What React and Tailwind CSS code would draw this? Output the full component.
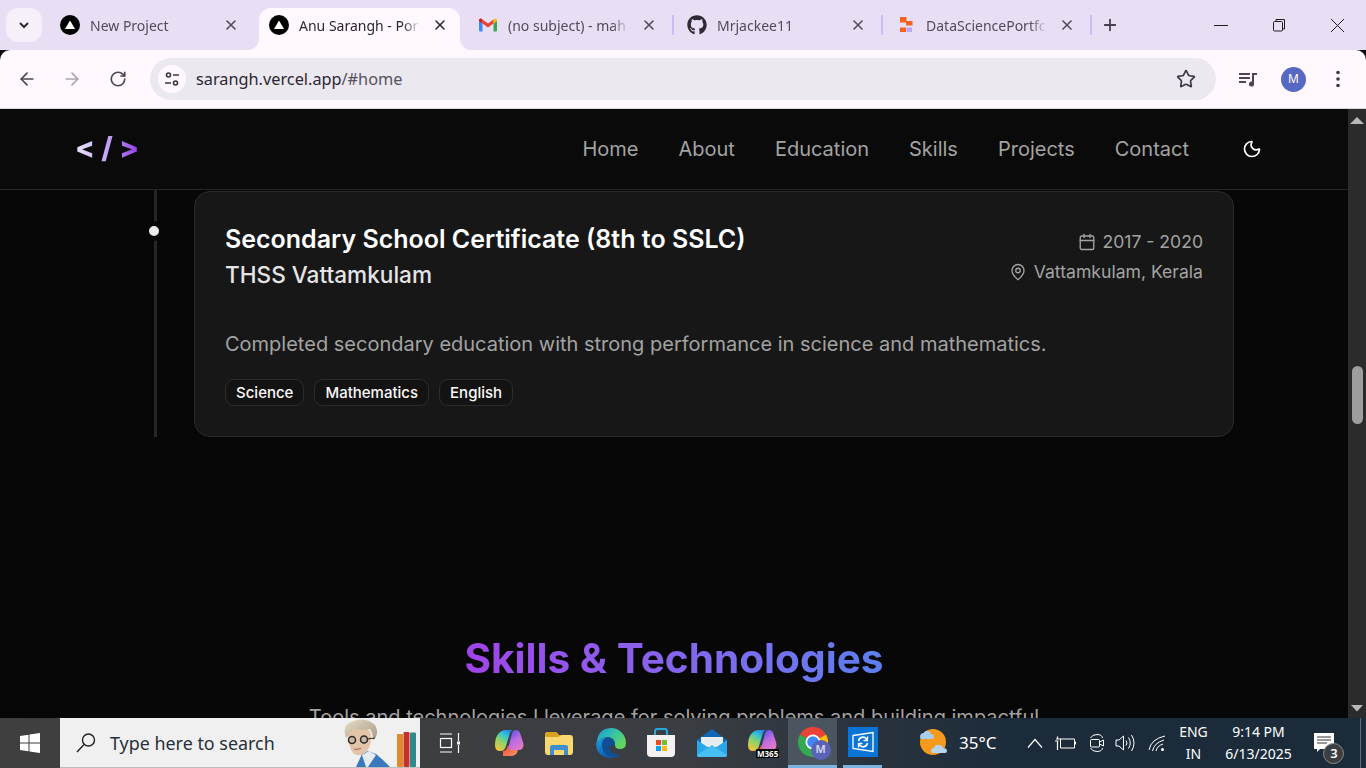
import React from "react";
import { ArrowLeft, ArrowRight, RotateCw, Star, X, Plus, Moon, Calendar, MapPin } from "lucide-react";
import { FaGithub } from "react-icons/fa";

const VercelIcon = () => (
  <svg width="20" height="20" viewBox="0 0 20 20" className="shrink-0">
    <circle cx="10" cy="10" r="10" fill="#000" />
    <path d="M10 5.500 15 14H5z" fill="#fff" />
  </svg>
);
const GmailIcon = () => (
  <svg width="20" height="20" viewBox="0 0 20 20" className="shrink-0">
    <path d="M1 5v10.500q0 1 1 1h2.500V8.500z" fill="#4285f4" />
    <path d="M19 5v10.500q0 1-1 1h-2.500V8.500z" fill="#34a853" />
    <path d="M15.500 4.500v4L19 6V5q0-2-2-1.500z" fill="#fbbc04" />
    <path d="M4.500 4.500v4L10 12.500l5.500-4v-4L10 8.500z" fill="#ea4335" />
    <path d="M1 5v1l3.500 2.500v-4L3 3.500Q1 3 1 5" fill="#c5221f" />
  </svg>
);
const DsIcon = () => (
  <svg width="20" height="20" viewBox="0 0 20 20" className="shrink-0">
    <rect x="4" y="2" width="6.500" height="5.500" fill="#f4621f" />
    <rect x="10" y="6" width="6.500" height="4.500" fill="#f4621f" />
    <rect x="4" y="12.500" width="6" height="4.500" fill="#f4621f" />
    <rect x="10.500" y="12.500" width="5.500" height="4.500" fill="#b9a8f5" />
  </svg>
);

const Tab = ({ icon, title, active, sep, className = "" }) => (
  <div className={`relative flex items-center h-[42px] pb-[8px] pl-[10px] pr-[3px] shrink-0 ${active ? "w-[201px] bg-[#fff8ff] rounded-t-[12px]" : "w-[209px]"} ${className}`}>
    {icon}
    <span className={`ml-[10px] flex-1 min-w-0 overflow-hidden whitespace-nowrap text-[14px] ${active ? "text-[#2b2733]" : "text-[#514b5c]"}`}
      style={{ maskImage: "linear-gradient(to right, #000 86%, transparent 100%)" }}>{title}</span>
    <X size={16} strokeWidth={2.4} className={`shrink-0 ml-[12px] ${active ? "text-[#2b2733]" : "text-[#514b5c]"}`} />
    <span className={`w-[2px] h-[20px] shrink-0 ${active ? "ml-[7px]" : "ml-[15px]"} ${sep ? "bg-[#cdbdf2]" : "bg-transparent"}`} />
    {active && <>
      <span className="absolute -left-[12px] bottom-0 w-[12px] h-[12px] bg-[radial-gradient(circle_at_0_0,transparent_12px,#fff8ff_12.5px)]" />
      <span className="absolute -right-[12px] bottom-0 w-[12px] h-[12px] bg-[radial-gradient(circle_at_100%_0,transparent_12px,#fff8ff_12.5px)]" />
    </>}
  </div>
);

const TabStrip = () => (
  <div className="h-[50px] bg-[#e9dff5] flex shrink-0 text-[#514b5c] relative">
    <div className="flex items-end w-[50px] shrink-0 pl-[6px] pb-[8px]">
      <div className="w-[36px] h-[34px] bg-[#f6f0fb] rounded-[12px] flex items-center justify-center">
        <svg width="12" height="12" viewBox="0 0 12 12"><path d="M2 4l4 4 4-4" fill="none" stroke="#2b2733" strokeWidth="2" /></svg>
      </div>
    </div>
    <div className="flex items-end h-full">
      <Tab icon={<VercelIcon />} title="New Project" />
      <Tab icon={<VercelIcon />} title="Anu Sarangh - Por" active />
      <Tab icon={<GmailIcon />} title="(no subject) - mah" sep className="ml-[8px]" />
      <Tab icon={<FaGithub size={20} color="#2f2b36" className="shrink-0" />} title="Mrjackee11" sep />
      <Tab icon={<DsIcon />} title="DataSciencePortfc" sep />
    </div>
    <div className="flex items-center h-full">
      <Plus size={18} strokeWidth={2.4} className="text-[#454050] ml-[6px]" />
    </div>
    <div className="ml-auto flex items-center h-full text-[#1f1f1f]">
      <div className="w-[58px] flex justify-center"><div className="w-[14px] h-px bg-[#1f1f1f]" /></div>
      <div className="w-[58px] flex justify-center">
        <svg width="14" height="14" viewBox="0 0 14 14" fill="none" stroke="#1f1f1f"><rect x="1.500" y="3.500" width="9" height="9.500" rx="1" /><path d="M4 3V1.500h8.500V11H11" /></svg>
      </div>
      <div className="w-[58px] flex justify-center">
        <svg width="15" height="15" viewBox="0 0 15 15" stroke="#1f1f1f"><path d="M1 1l13 13M14 1 1 14" /></svg>
      </div>
    </div>
  </div>
);

const ToolBar = () => (
  <div className="h-[59px] bg-[#fff8ff] rounded-t-[10px] flex items-center shrink-0 border-b border-[#dcd6e2] relative">
    <div className="w-[150px] flex items-center shrink-0 pl-[17px]">
      <ArrowLeft size={20} strokeWidth={2} className="text-[#4b4653]" />
      <ArrowRight size={20} strokeWidth={2} className="text-[#a9a4b0] ml-[25px]" />
      <RotateCw size={18} strokeWidth={2.2} className="text-[#4b4653] ml-[27px]" />
    </div>
    <div className="w-[1066px] h-[42px] bg-[#ebe8f0] rounded-full flex items-center pl-[8px] pr-[20px]">
      <div className="w-[28px] h-[28px] rounded-full bg-[#fff8ff] flex items-center justify-center">
        <svg width="16" height="16" viewBox="0 0 16 16" fill="none" stroke="#38333f" strokeWidth="1.600">
          <circle cx="4.500" cy="4" r="2" /><path d="M9 4h6M1 12h6" /><circle cx="11.500" cy="12" r="2" />
        </svg>
      </div>
      <span className="ml-[10px] text-[16.3px] text-[#2b2733] whitespace-nowrap">sarangh.vercel.app<span className="text-[#57525f]">/#home</span></span>
      <Star size={20} strokeWidth={2} className="ml-auto text-[#3d3845]" />
    </div>
    <div className="flex items-center">
      <svg width="20" height="18" viewBox="0 0 20 18" className="ml-[22px]" fill="#4b4653">
        <rect x="1" y="3" width="11" height="2" /><rect x="1" y="7" width="11" height="2" /><rect x="1" y="11" width="7" height="2" />
        <path d="M14 3h5v2h-3v9a2.500 2.500 0 1 1-2-2.400z" />
      </svg>
      <div className="ml-[23px] w-[25px] h-[25px] rounded-full bg-[#5768c4] text-white text-[12px] flex items-center justify-center">M</div>
      <svg width="4" height="18" viewBox="0 0 4 18" className="ml-[30px]" fill="#3d3845"><circle cx="2" cy="2.500" r="1.800" /><circle cx="2" cy="9" r="1.800" /><circle cx="2" cy="15.500" r="1.800" /></svg>
    </div>
  </div>
);

const NavBar = () => (
  <nav className="h-[81px] border-b border-[#262626] bg-[#0a0a0a] flex items-center pl-[75px] pr-[86px] shrink-0">
    <span className="text-[29px] font-extrabold bg-linear-to-r from-[#ede4fb] via-[#c4a5f7] to-[#9333ea] bg-clip-text text-transparent whitespace-pre -mt-[2px]">{"< / >"}</span>
    <div className="ml-auto flex items-center gap-[40px] text-[20px] text-[#a3a3a3]">
      <span>Home</span><span>About</span><span>Education</span><span>Skills</span><span>Projects</span><span>Contact</span>
      <Moon size={20} strokeWidth={2} className="text-white ml-[13px]" />
    </div>
  </nav>
);

const Tag = ({ children }) => (
  <span className="h-[27px] px-[10px] pt-px flex items-center rounded-[9px] border border-[#2c2c2c] bg-[#131313] text-[15px] font-medium text-[#fafafa]">{children}</span>
);

const EducationCard = () => (
  <div className="flex pl-[154px] shrink-0">
    <div className="relative w-[3px] bg-[#262626]">
      <span className="absolute left-[-10px] top-[31px] w-[10px] h-[10px] rounded-full bg-[#ededed] box-content border-[5px] border-[#070707]" />
    </div>
    <div className="ml-[37px] mt-px w-[1040px] h-[246px] rounded-[16px] border border-[#2a2a2a] bg-[#171717] px-[30px] pt-[29px]">
      <div className="flex justify-between">
        <div>
          <h3 className="text-[25px] leading-[36px] font-semibold text-white">Secondary School Certificate (8th to SSLC)</h3>
          <p className="text-[22.6px] leading-[35px] font-medium text-[#e5e5e5]">THSS Vattamkulam</p>
        </div>
        <div className="flex flex-col items-end text-[#a3a3a3] text-[17.6px] pt-[6px]">
          <div className="flex items-center h-[30px]"><Calendar size={18} strokeWidth={1.8} className="mr-[6px]" />2017 - 2020</div>
          <div className="flex items-center h-[30px]"><MapPin size={18} strokeWidth={1.8} className="mr-[7px]" />Vattamkulam, Kerala</div>
        </div>
      </div>
      <p className="mt-[37px] text-[20px] leading-[30px] text-[#a3a3a3]">Completed secondary education with strong performance in science and mathematics.</p>
      <div className="mt-[20px] flex gap-[10px]">
        <Tag>Science</Tag><Tag>Mathematics</Tag><Tag>English</Tag>
      </div>
    </div>
  </div>
);

const Scrollbar = () => (
  <div className="w-[18px] bg-[#2b2b2b] shrink-0 flex flex-col items-center">
    <svg width="14" height="18" viewBox="0 0 14 18" fill="#b8b8b8"><path d="M0 15 7 8l7 7z" /></svg>
    <div className="mt-[239px] ml-px w-[11px] h-[58px] rounded-[6px] bg-[#9e9e9e]" />
    <svg width="14" height="18" viewBox="0 0 14 18" fill="#b8b8b8" className="mt-auto"><path d="M1 5l6 6.500L13 5z" /></svg>
  </div>
);

const Win = () => (
  <svg width="20" height="20" viewBox="0 0 20 20" fill="#fff"><path d="M0 3l8.500-1.300V9.500H0zM9.500 1.500 20 0v9.500H9.500zM0 10.500h8.500v7.800L0 17zM9.500 10.500H20V20L9.500 18.500z" /></svg>
);

const Person = () => (
  <svg width="78" height="48" viewBox="0 0 78 48" className="absolute right-0 bottom-0">
    <defs>
      <linearGradient id="hair" x1="0" y1="0" x2="1" y2="1"><stop offset="0" stopColor="#e6dcc4" /><stop offset="1" stopColor="#a69a84" /></linearGradient>
    </defs>
    <path d="M14 48 20 35l6-3 8 3 7 6 7 7z" fill="#3a78bd" />
    <path d="M20 36l4 12h2l8-12-7-4z" fill="#e6ebef" />
    <path d="M6 18q0-10 11-10 12 0 12 10 0 10-5 15-4 4-9 3-5-1-7-8-2-5-2-10" fill="#e3c4a8" />
    <path d="M4 19Q-1 5 12 2q10-4 20 3 5 5 2 13l-3 3q0-7-3-11-8 2-16 0-5 2-5 6z" fill="url(#hair)" />
    <circle cx="10" cy="21" r="3.500" fill="#cdb8a4" stroke="#2b2b2b" strokeWidth="1.500" />
    <circle cx="22" cy="20.500" r="3.500" fill="#cdb8a4" stroke="#2b2b2b" strokeWidth="1.500" />
    <path d="M25 20l8-1" stroke="#2b2b2b" strokeWidth="1.200" />
    <path d="M12 30q4 1 7-1" stroke="#a8705a" strokeWidth="1.200" fill="none" />
    <rect x="55" y="15" width="6" height="33" fill="#e08a2a" rx="1" />
    <rect x="61.500" y="13" width="6" height="35" fill="#c4322b" rx="1" />
    <rect x="68" y="13.500" width="6" height="34.500" fill="#2f8a8a" rx="1" />
  </svg>
);

const Copilot = ({ id }) => (
  <svg width="29" height="26" viewBox="0 0 29 26">
    <defs>
      <linearGradient id={`${id}a`} x1=".8" y1="0" x2=".2" y2="1"><stop offset="0" stopColor="#2a7be8" /><stop offset=".3" stopColor="#30c4d8" /><stop offset=".6" stopColor="#8dd468" /><stop offset="1" stopColor="#f6c23c" /></linearGradient>
      <linearGradient id={`${id}b`} x1=".2" y1="0" x2=".8" y2="1"><stop offset="0" stopColor="#4a55e0" /><stop offset=".45" stopColor="#b86ae6" /><stop offset="1" stopColor="#ec7ac0" /></linearGradient>
      <linearGradient id={`${id}c`} x1="0" y1="0" x2="1" y2="1"><stop offset="0" stopColor="#f04a3a" /><stop offset="1" stopColor="#f7986a" /></linearGradient>
    </defs>
    <path d="M10 0h9q-3 0-4 3l-4 13q-1 5-6 5-5 0-5-6 0-8 4-12 3-3 6-3" fill={`url(#${id}a)`} />
    <path d="M17 3q1-3 4-3 3 0 4 3l3 9q2 8-5 8h-8l-2-3 1-2z" fill={`url(#${id}b)`} />
    <path d="M8 26q4 0 5-3l1-3h9q-1 6-8 6zM8 21q3 0 4-3l1-3 2 5-3 6H8z" fill={`url(#${id}c)`} />
  </svg>
);

const Folder = () => (
  <svg width="28" height="23" viewBox="0 0 28 23">
    <path d="M0 3q0-3 3-3h8l3 3h11q3 0 3 3v14q0 3-3 3H3q-3 0-3-3z" fill="#f8d670" />
    <path d="M0 4V3q0-3 3-3h8l3 3 3 0-4 2H3q-3 0-3-1" fill="#d9a21e" />
    <path d="M5 23V15q0-2 2-2h14q2 0 2 2v8h-4v-5h-10v5z" fill="#3d8fd1" />
  </svg>
);
const Edge = () => (
  <svg width="30" height="30" viewBox="0 0 30 30">
    <defs>
      <linearGradient id="edgeg" x1="0" y1="0" x2="1" y2=".6"><stop offset="0" stopColor="#1a9bd8" /><stop offset=".55" stopColor="#36c3a8" /><stop offset="1" stopColor="#63d65c" /></linearGradient>
      <linearGradient id="edgeb" x1="0" y1="0" x2=".5" y2="1"><stop offset="0" stopColor="#1e9fe0" /><stop offset="1" stopColor="#0c5cb0" /></linearGradient>
    </defs>
    <path d="M15 0A15 15 0 0 1 30 15q0 6-6 6-5 0-5-4 0-7-7-8Q5 9 1 15 1 1 15 0" fill="url(#edgeg)" />
    <path d="M0 15Q5 9 12 9q-6 2-6 8 1 12 14 12Q17 30 15 30 0 29 0 15" fill="url(#edgeb)" />
    <path d="M12 9q7 1 7 8-5 0-6 3 0 5 11 7-3 2-5 2Q7 29 6 17q0-6 6-8" fill="#0f4f95" />
  </svg>
);
const Store = () => (
  <svg width="30" height="30" viewBox="0 0 30 30">
    <path d="M9 8V3.500Q9 1 11 1h8q2 0 2 2.500V8" fill="none" stroke="#25a8e0" strokeWidth="2" />
    <path d="M1 7h28v18q0 4-4 4H5q-4 0-4-4z" fill="#f4f2f0" />
    <rect x="10" y="12" width="5" height="5" fill="#ea4a2a" />
    <rect x="16" y="12" width="5" height="5" fill="#7cb92c" />
    <rect x="10" y="18" width="5" height="5" fill="#14a0e4" />
    <rect x="16" y="18" width="5" height="5" fill="#fcb60f" />
  </svg>
);
const Mail = () => (
  <svg width="30" height="28" viewBox="0 0 30 28">
    <path d="M0 11 15 0l15 11v3H0z" fill="#0f67b5" />
    <path d="M4 8h22v10H4z" fill="#e8edf2" />
    <path d="M0 11l15 10 15-10v15q0 2-2 2H2q-2 0-2-2z" fill="#2aa7ea" />
    <path d="M0 26 15 16l15 10v0q0 2-2 2H2q-2 0-2-2" fill="#47bff2" />
  </svg>
);
const Chrome = () => (
  <div className="relative w-[30px] h-[30px]">
    <svg width="30" height="30" viewBox="0 0 30 30">
      <path d="M15 15 2 7.500A15 15 0 0 1 28 7.500z" fill="#ea4335" />
      <path d="M15 15 2 7.500A15 15 0 0 0 15 30z" fill="#34a853" />
      <path d="M15 15 28 7.500A15 15 0 0 1 15 30z" fill="#fbbc04" />
      <circle cx="15" cy="15" r="7.500" fill="#fff" />
      <circle cx="15" cy="15" r="5.800" fill="#4285f4" />
    </svg>
    <span className="absolute left-[13px] top-[13px] w-[20px] h-[20px] rounded-full bg-[#5a63b8] text-[#d8daf0] text-[11px] font-semibold flex items-center justify-center">M</span>
  </div>
);
const SyncTile = () => (
  <div className="w-[30px] h-[30px] bg-[#0a74d6] flex items-center justify-center">
    <svg width="24" height="22" viewBox="0 0 24 22" fill="none" stroke="#fff" strokeWidth="1.300">
      <path d="M2 4.500 22 1.500v19L2 17.500z" />
      <path d="M7.500 10a4.500 4.500 0 0 1 8-2l1 1M16.500 12a4.500 4.500 0 0 1-8 2l-1-1" strokeWidth="1.700" />
      <path d="M16.500 5.500v4h-4M7.500 16.500v-4h4" strokeWidth="1.300" />
    </svg>
  </div>
);
const Weather = () => (
  <svg width="32" height="30" viewBox="0 0 32 30">
    <circle cx="16" cy="14" r="13" fill="#f59a1d" />
    <path d="M3 9q0-4 4-4 1-3 4-2t3 3q3 0 3 3 0 2-2 2H5Q3 11 3 9" fill="#a9cdf0" />
    <path d="M14 23q0-3 3-3 1-4 5-3t4 3q4 0 4 3 0 2-2 2H16q-2 0-2-2" fill="#b7d5f2" />
  </svg>
);

const TrayIcons = () => (
  <div className="flex items-center text-white">
    <svg width="16" height="10" viewBox="0 0 16 10" fill="none" stroke="#fff" strokeWidth="1.200" className="ml-[31px]"><path d="M1 9.500l7-8 7 8" /></svg>
    <svg width="21" height="14" viewBox="0 0 21 14" fill="none" stroke="#fff" className="ml-[12px]"><path d="M5.500 3h14v9h-14z" /><path d="M1 3h5M0 5h3.500M2.500 0.500v2.500M2.500 5v9" strokeWidth="1.200" /><rect x="19.500" y="5.500" width="1.500" height="3" fill="#fff" stroke="none" /></svg>
    <svg width="15" height="18" viewBox="0 0 15 18" fill="none" stroke="#fff" className="ml-[13px]"><path d="M1.500 4Q3 .5 8 .5T13.500 4M1.500 14Q3 17.500 8 17.500T13.500 14" /><rect x="1.500" y="5.500" width="9" height="7.500" rx="1" /><path d="M10.500 8l4-2v6l-4-2" /></svg>
    <svg width="20" height="18" viewBox="0 0 20 18" fill="none" stroke="#fff" className="ml-[11px]"><path d="M1 6h3l4.500-4v14L4 12H1zM11 6.500q2 2.500 0 5M13.500 3.500q3.500 5.500 0 11M16.500 1q5 8 0 16" /></svg>
    <svg width="19" height="17" viewBox="0 0 19 17" fill="none" stroke="#fff" className="ml-[13px]"><path d="M1 15Q3 4 17 1M4.500 16Q6 8 16 5M8 16q1-5 7-7" /><circle cx="14.500" cy="14.500" r="1.500" fill="#fff" stroke="none" /></svg>
  </div>
);

const Taskbar = () => (
  <div className="h-[50px] shrink-0 flex items-center bg-linear-to-r from-[#3f3f3f] via-[#3a3d42] via-50% to-[#1b2b3a] to-75% text-white" style={{ fontFamily: '"Noto Sans", sans-serif' }}>
    <div className="w-[60px] h-full flex items-center justify-center shrink-0"><Win /></div>
    <div className="relative w-[360px] h-full bg-[#f0f0f0] border-b border-[#bdbdbd] flex items-center shrink-0 overflow-hidden">
      <svg width="20" height="20" viewBox="0 0 20 20" fill="none" stroke="#222" strokeWidth="1.400" className="ml-[16px]"><circle cx="12.500" cy="7" r="6" /><path d="M8 11.500 1 19" /></svg>
      <span className="ml-[14px] pt-px text-[17.9px] text-[#27303a]">Type here to search</span>
      <Person />
    </div>
    <div className="w-[60px] flex justify-center shrink-0">
      <svg width="22" height="20" viewBox="0 0 22 20" fill="none" stroke="#fff" strokeWidth="1.200"><path d="M1 1h12M1 19h12" /><rect x="1.500" y="5.500" width="11" height="9" /><path d="M19.500 0v8M19.500 12v8" /><rect x="18" y="8.500" width="3" height="3" fill="#fff" stroke="none" /></svg>
    </div>
    <div className="w-[50px] ml-[4px] flex justify-center shrink-0"><Copilot id="c1" /></div>
    <div className="w-[50px] flex justify-center shrink-0"><Folder /></div>
    <div className="w-[50px] ml-[2px] flex justify-center shrink-0"><Edge /></div>
    <div className="w-[50px] flex justify-center shrink-0"><Store /></div>
    <div className="w-[50px] ml-[1px] flex justify-center shrink-0"><Mail /></div>
    <div className="relative w-[50px] flex justify-center shrink-0">
      <Copilot id="c2" />
      <span className="absolute left-[19px] top-[19px] px-[1px] bg-black text-[8px] leading-[9px] font-bold rounded-[1px]">M365</span>
    </div>
    <div className="w-[49px] ml-[1px] h-full bg-[#4a5560] border-b-[3px] border-[#79b3e0] flex items-center justify-center shrink-0"><Chrome /></div>
    <div className="w-[39px] ml-[6px] h-full border-b-[3px] border-[#79b3e0] flex items-center justify-center shrink-0"><SyncTile /></div>
    <div className="ml-[35px] shrink-0"><Weather /></div>
    <span className="ml-[10px] text-[17px] whitespace-nowrap">35°C</span>
    <TrayIcons />
    <div className="ml-[7px] w-[38px] text-center text-[14px] leading-[22px] shrink-0">
      <div>ENG</div><div>IN</div>
    </div>
    <div className="ml-[6px] w-[80px] text-center text-[14px] leading-[22px] shrink-0">
      <div>9:14 PM</div><div>6/13/2025</div>
    </div>
    <div className="relative ml-[12px] shrink-0 w-[36px] h-[30px]">
      <svg width="20" height="20" viewBox="0 0 20 20" className="absolute left-[4px] top-[5px]"><path d="M0 0h20v16H6l-3 3v-3H0z" fill="#fff" /><path d="M3 4h14M3 7h14M3 10h10" stroke="#333" strokeWidth="1" /></svg>
      <span className="absolute left-[13px] top-[15px] w-[21px] h-[21px] rounded-full bg-[#3c3f42] border border-[#8a8a8a] text-white text-[13px] font-semibold flex items-center justify-center">3</span>
    </div>
    <div className="ml-auto mr-[5px] w-px h-full bg-[#5f6b76] shrink-0" />
  </div>
);

export default function App() {
  return (
    <div className="w-[1366px] h-[768px] overflow-hidden flex flex-col bg-[#070707]" style={{ fontFamily: '"Noto Sans", sans-serif' }}>
      <TabStrip />
      <ToolBar />
      <div className="flex-1 min-h-0 flex">
        <main className="flex-1 min-w-0 overflow-hidden flex flex-col" style={{ fontFamily: 'Inter, sans-serif' }}>
          <NavBar />
          <EducationCard />
          <section className="mt-[195px] text-center">
            <h2 className="text-[40.6px] leading-[54px] font-bold">
              <span className="bg-linear-to-r from-[#a143ea] to-[#5b7ef0] bg-clip-text text-transparent">Skills &amp; Technologies</span>
            </h2>
            <p className="mt-[16px] text-[20px] leading-[30px] text-[#a3a3a3]">Tools and technologies I leverage for solving problems and building impactful</p>
          </section>
        </main>
        <Scrollbar />
      </div>
      <Taskbar />
    </div>
  );
}
